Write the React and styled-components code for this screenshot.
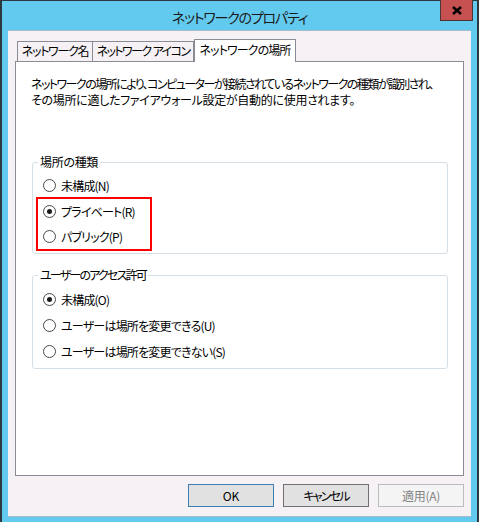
import React, { useState } from "react";
import styled, { createGlobalStyle } from "styled-components";

const GlobalStyle = createGlobalStyle`
  html, body {
    margin: 0;
    padding: 0;
    background: #63caef;
  }
  body {
    font-family: "Noto Sans CJK JP", "Noto Sans", sans-serif;
  }
`;

const Frame = styled.div`
  width: 479px;
  height: 522px;
  box-sizing: border-box;
  background: #63caef;
  border-top: 1px solid #2c3a40;
  border-left: 2px solid #2c3a40;
  border-right: 2px solid #2c3a40;
  display: flex;
  flex-direction: column;
  font-family: "Noto Sans CJK JP", sans-serif;
  font-feature-settings: "palt";
  color: #000;
`;

const TitleBar = styled.div`
  height: 29px;
  display: grid;
  grid-template-columns: 1fr auto 1fr;
  align-items: center;
`;

const Title = styled.div`
  font-size: 14px;
  line-height: 20px;
  color: #1a1a1a;
  margin-top: 2px;
  letter-spacing: -1.2px;
`;

const CloseButton = styled.div`
  justify-self: end;
  align-self: start;
  margin-top: -1px;
  margin-right: 4px;
  width: 33px;
  height: 21px;
  box-sizing: border-box;
  background: #c75050;
  border: 1px solid #4b3434;
  border-top: none;
  display: flex;
  align-items: center;
  justify-content: center;
`;

const Client = styled.div`
  flex: 1;
  margin: 0 6px 5px 6px;
  background: #f5f1f5;
  border-top: 1px solid #a6bccb;
  border-bottom: 1px solid #a6bccb;
  padding: 8px 7px 9px 7px;
  display: flex;
  flex-direction: column;
`;

const TabRow = styled.div`
  height: 22px;
  display: flex;
  align-items: flex-end;
  padding-left: 2px;
`;

const Tab = styled.div`
  box-sizing: border-box;
  width: ${(p) => p.$w}px;
  margin-left: ${(p) => p.$ml || 0}px;
  height: ${(p) => (p.$active ? 23 : 20)}px;
  margin-bottom: ${(p) => (p.$active ? -1 : 0)}px;
  border: 1px solid #898c95;
  border-bottom: none;
  background: ${(p) => (p.$active ? "#fff" : "#f5f1f5")};
  position: relative;
  z-index: ${(p) => (p.$active ? 2 : 1)};
  font-size: 12px;
  line-height: ${(p) => (p.$active ? 20 : 18)}px;
  display: flex;
  justify-content: center;
  white-space: pre;
  letter-spacing: ${(p) => p.$ls}px;
  word-spacing: 1px;
`;

const Panel = styled.div`
  height: 415px;
  box-sizing: border-box;
  border: 1px solid #898c95;
  background: #fff;
  padding: 14px 15px 0 16px;
`;

const Description = styled.div`
  margin-left: -1px;
  font-size: 12px;
  line-height: 16px;
  white-space: nowrap;
`;

const Line = styled.div`
  letter-spacing: ${(p) => p.$ls}px;
`;

const Group = styled.fieldset`
  margin: ${(p) => p.$mt}px 0 0 0;
  width: 416px;
  box-sizing: border-box;
  border: 1px solid #d5dfe5;
  border-radius: 3px;
  padding: ${(p) => p.$pad};
  min-width: 0;
`;

const Legend = styled.legend`
  margin-left: 5px;
  padding: 0 2px;
  font-size: 12px;
  line-height: 16px;
  letter-spacing: ${(p) => p.$ls}px;
`;

const Row = styled.label`
  height: 26px;
  display: flex;
  align-items: center;
  gap: 4px;
  padding-left: 10px;
  font-size: 12px;
  letter-spacing: -0.8px;
  white-space: nowrap;
`;

const Highlight = styled.div`
  margin: -1px 0 -1px 3px;
  width: 116px;
  box-sizing: border-box;
  border: 2px solid #f00;

  & > ${Row} {
    height: 25px;
    padding-left: 5px;
  }
`;

const RadioCircle = styled.span`
  width: 13px;
  height: 13px;
  box-sizing: border-box;
  border-radius: 50%;
  border: 1px solid #4a4a4a;
  background: #fff;
  display: flex;
  align-items: center;
  justify-content: center;
  flex-shrink: 0;
  margin-right: 1px;

  &::after {
    content: "";
    width: 5px;
    height: 5px;
    border-radius: 50%;
    background: ${(p) => (p.$checked ? "#1a1a1a" : "transparent")};
  }
`;

const ButtonRow = styled.div`
  margin-top: 8px;
  display: flex;
  justify-content: flex-end;
  gap: 9px;
`;

const Button = styled.div`
  width: 86px;
  height: 23px;
  box-sizing: border-box;
  border: 1px solid ${(p) => (p.$default ? "#3c7fb1" : p.$disabled ? "#b9bdc0" : "#707070")};
  background: ${(p) => (p.$disabled ? "#f4f4f4" : "#e1e1e1")};
  color: ${(p) => (p.$disabled ? "#838383" : "#000")};
  font-size: 12px;
  line-height: 21px;
  text-align: center;
  letter-spacing: ${(p) => p.$ls || 0}px;
`;

function Radio({ label, checked, onSelect }) {
  return (
    <Row onClick={onSelect}>
      <RadioCircle $checked={checked} />
      {label}
    </Row>
  );
}

export default function App() {
  const [location, setLocation] = useState("private");
  const [access, setAccess] = useState("none");

  return (
    <>
      <GlobalStyle />
      <Frame>
        <TitleBar>
          <div />
          <Title>ネットワークのプロパティ</Title>
          <CloseButton>
            <svg width="10" height="9" viewBox="0 0 10 9">
              <path d="M1 1 L9 8 M9 1 L1 8" stroke="#000" strokeWidth="2.4" />
            </svg>
          </CloseButton>
        </TitleBar>
        <Client>
          <TabRow>
            <Tab $w={76} $ls={-1.3}>ネットワーク名</Tab>
            <Tab $w={102} $ml={-1} $ls={-1.6}>ネットワーク アイコン</Tab>
            <Tab $w={102} $active $ls={-0.9}>ネットワークの場所</Tab>
          </TabRow>
          <Panel>
            <Description>
              <Line $ls={-1.55}>
                ネットワークの場所により、コンピューターが接続されているネットワークの種類が識別され、
              </Line>
              <Line $ls={-0.3}>
                その場所に適したファイアウォール設定が自動的に使用されます。
              </Line>
            </Description>
            <Group $mt={46} $pad="2px 0 3px 0">
              <Legend $ls={-0.3}>場所の種類</Legend>
              <Radio
                label="未構成(N)"
                checked={location === "none"}
                onSelect={() => setLocation("none")}
              />
              <Highlight>
                <Radio
                  label="プライベート(R)"
                  checked={location === "private"}
                  onSelect={() => setLocation("private")}
                />
                <Radio
                  label="パブリック(P)"
                  checked={location === "public"}
                  onSelect={() => setLocation("public")}
                />
              </Highlight>
            </Group>
            <Group $mt={13} $pad="3px 0 4px 0">
              <Legend $ls={-1.8}>ユーザーのアクセス許可</Legend>
              <Radio
                label="未構成(O)"
                checked={access === "none"}
                onSelect={() => setAccess("none")}
              />
              <Radio
                label="ユーザーは場所を変更できる(U)"
                checked={access === "can"}
                onSelect={() => setAccess("can")}
              />
              <Radio
                label="ユーザーは場所を変更できない(S)"
                checked={access === "cannot"}
                onSelect={() => setAccess("cannot")}
              />
            </Group>
          </Panel>
          <ButtonRow>
            <Button $default>OK</Button>
            <Button $ls={-1.8}>キャンセル</Button>
            <Button $disabled $ls={-0.3}>適用(A)</Button>
          </ButtonRow>
        </Client>
      </Frame>
    </>
  );
}
